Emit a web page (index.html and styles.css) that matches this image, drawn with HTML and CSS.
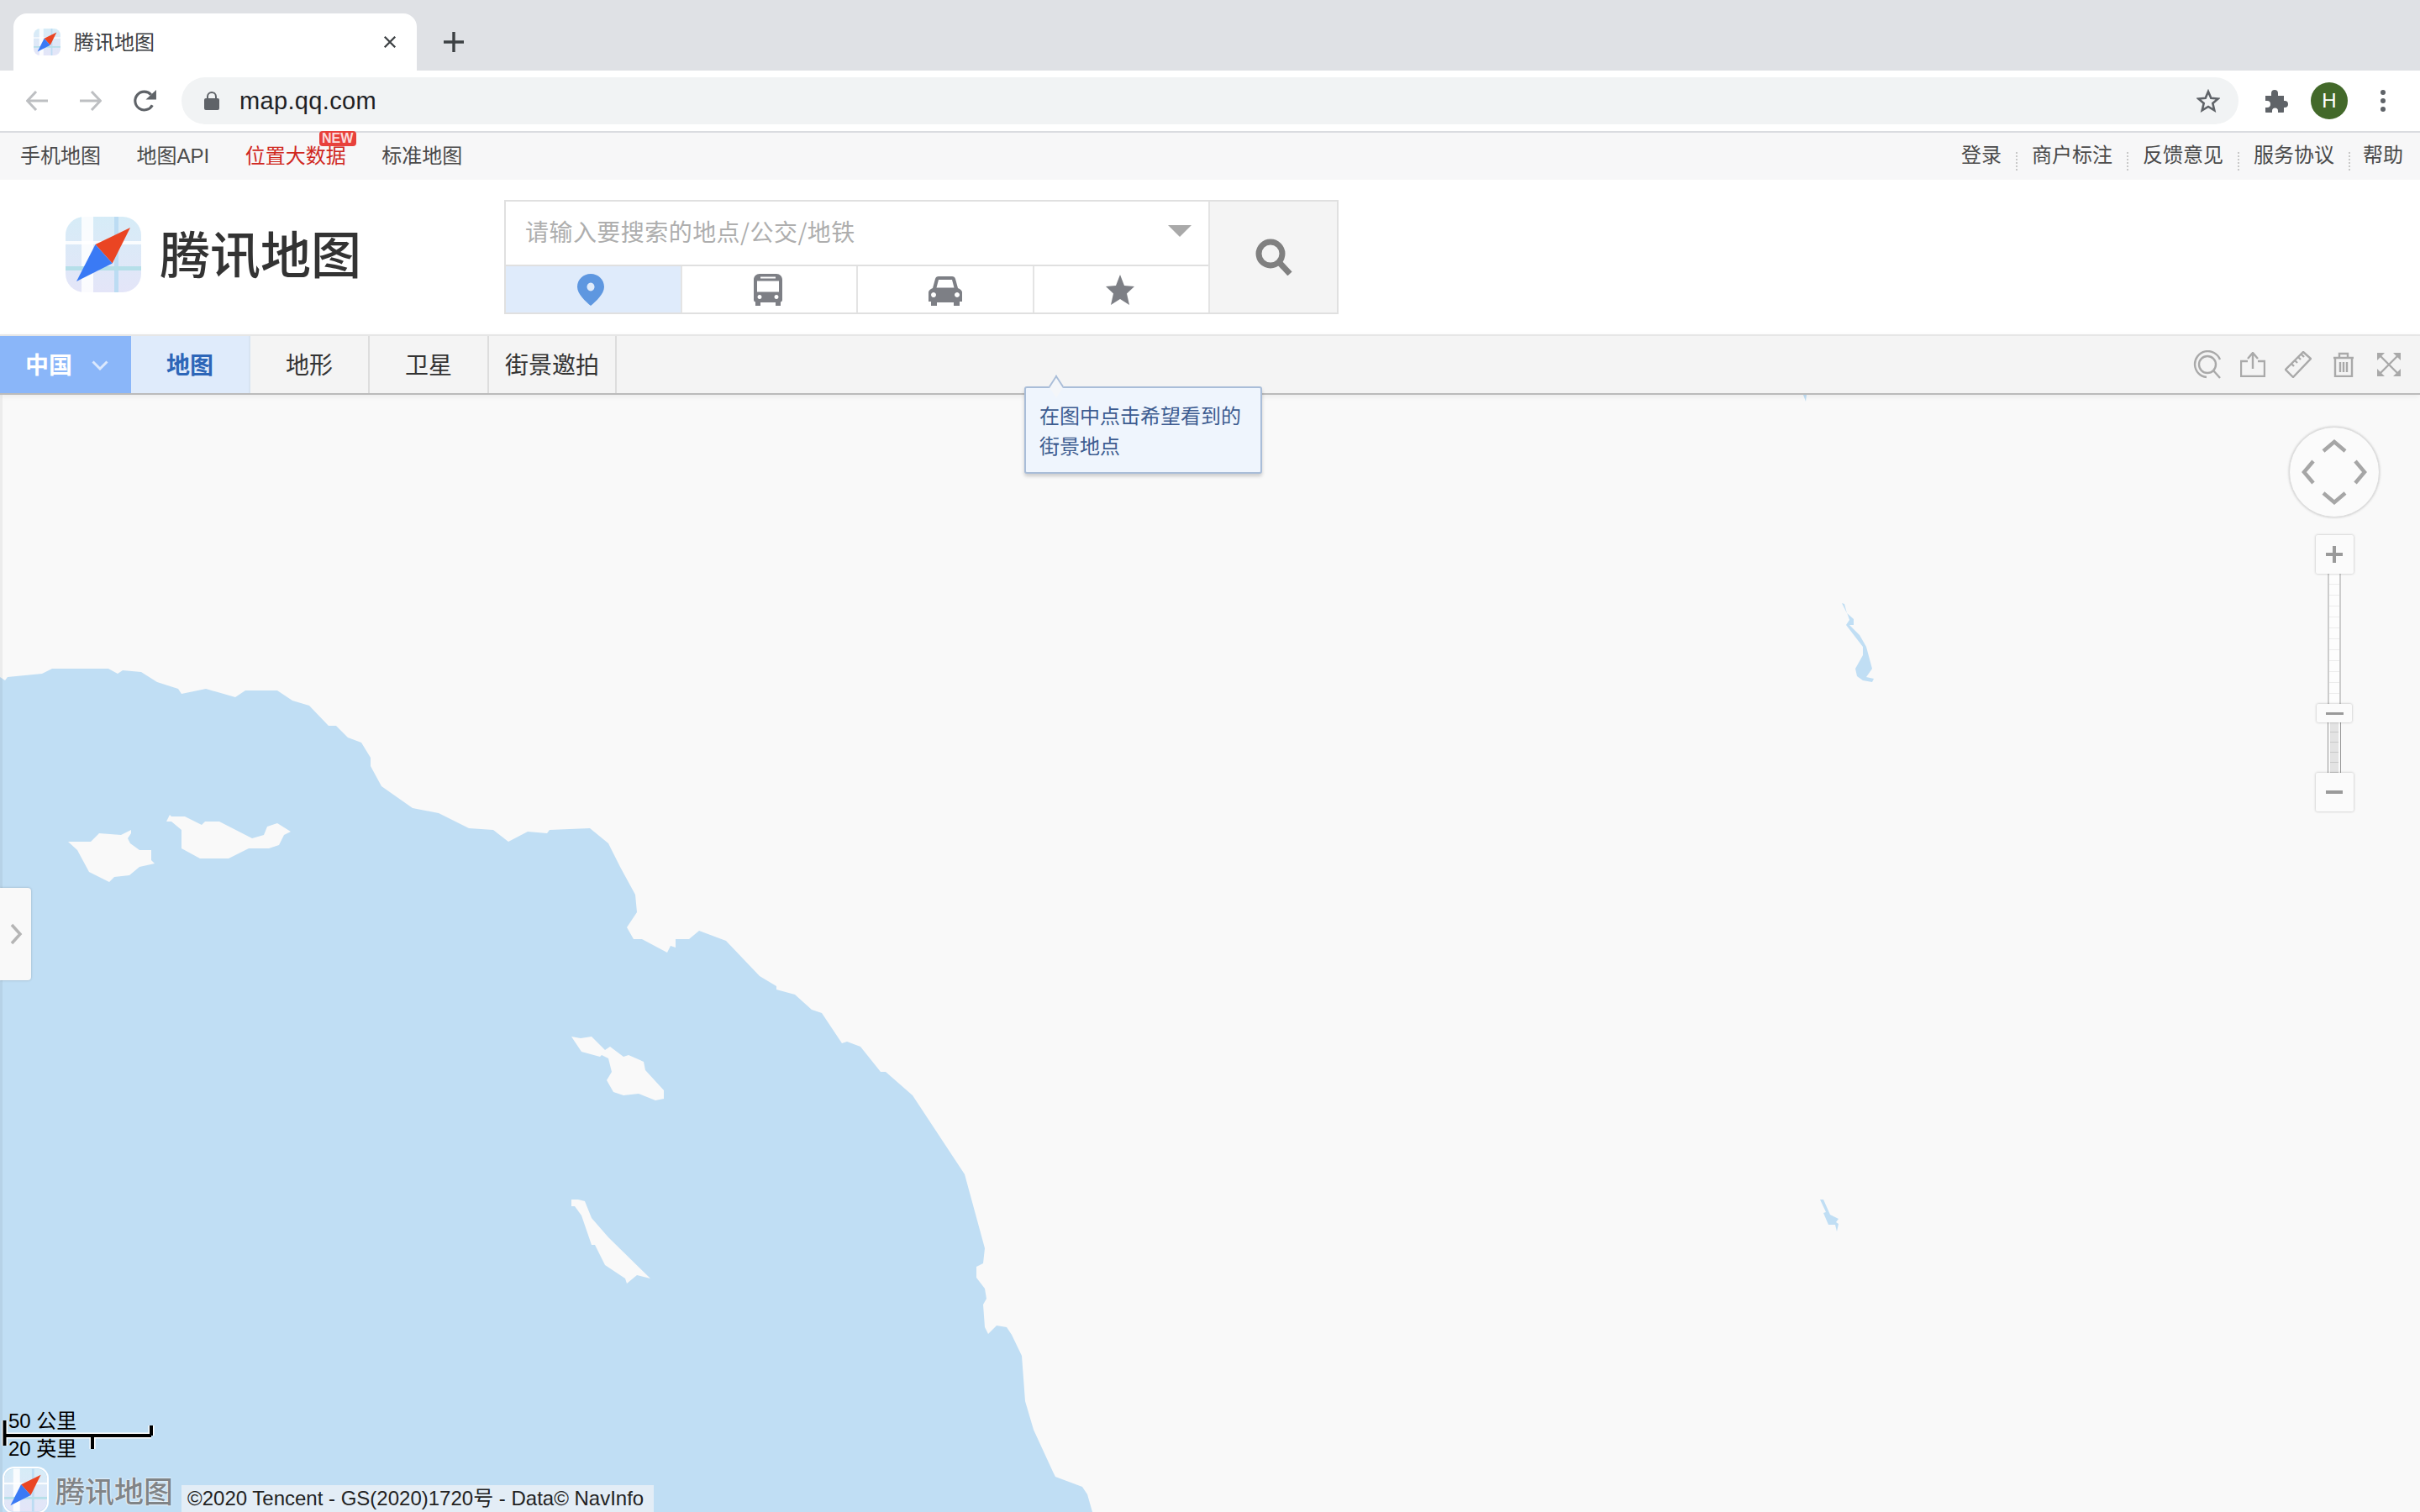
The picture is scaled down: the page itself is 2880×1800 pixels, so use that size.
FILE: index.html
```html
<!DOCTYPE html>
<html lang="zh-CN">
<head>
<meta charset="utf-8">
<title>腾讯地图</title>
<link rel="stylesheet" href="styles.css">
</head>
<body>
<svg class="defs" width="0" height="0" aria-hidden="true">
  <defs>
    <linearGradient id="tile" x1="0" y1="0" x2="0" y2="1">
      <stop offset="0" stop-color="#d6ecf7"/>
      <stop offset="1" stop-color="#e4e5f8"/>
    </linearGradient>
    <symbol id="compass" viewBox="0 0 90 90">
      <rect width="90" height="90" rx="22" fill="url(#tile)"/>
      <rect x="19" width="14" height="90" fill="#fff" opacity=".85"/>
      <rect y="29" width="90" height="4" fill="#fff" opacity=".85"/>
      <rect x="58" width="5" height="90" fill="#bcdcf3"/>
      <rect y="59" width="90" height="5" fill="#b6dfe9"/>
      <path d="M77 13 35.5 33 55.7 55.5Z" fill="#ea4523"/>
      <path d="M35.5 33 13 77 55.7 55.5Z" fill="#3a7af5"/>
    </symbol>
  </defs>
</svg>

<header class="tabstrip">
  <div class="tab">
    <svg class="favicon"><use href="#compass"/></svg>
    <span class="tab-title">腾讯地图</span>
    <svg class="tab-close" viewBox="0 0 18 18"><path d="M2 2 16 16M16 2 2 16"/></svg>
  </div>
  <svg class="tab-new" viewBox="0 0 24 24"><path d="M12 0V24M0 12H24"/></svg>
</header>

<nav class="toolbar">
  <div class="tool-btn"><svg class="nav-icon dim" viewBox="0 0 26 24"><path d="M26 12H2M12 1 1.500 12 12 23"/></svg></div>
  <div class="tool-btn"><svg class="nav-icon dim" viewBox="0 0 26 24"><path d="M0 12H24M14 1 24.500 12 14 23"/></svg></div>
  <div class="tool-btn"><svg class="nav-icon reload" viewBox="0 0 28 26"><path d="M22.500 17.500A10.500 10.500 0 1 1 21 5.500"/><path class="fill" d="M15 11H27V0Z"/></svg></div>
  <div class="omnibox">
    <svg class="lock" viewBox="0 0 18 22"><path d="M4 9V6a5 5 0 0 1 10 0v3" fill="none" stroke="#5f6368" stroke-width="2"/><rect y="8" width="18" height="14" rx="2" fill="#5f6368"/></svg>
    <span class="url">map.qq.com</span>
    <svg class="star-o" viewBox="0 0 28 28"><path d="M14 3 17.300 10.800 25.800 11.500 19.300 17 21.300 25.300 14 20.900 6.700 25.300 8.700 17 2.200 11.500 10.700 10.800Z"/></svg>
  </div>
  <div class="tool-right">
    <div class="tool-btn"><svg class="puzzle" viewBox="0 0 29 28"><path d="M2 8h7V5a4 4 0 0 1 8 0v3h7v6h1a4 4 0 0 1 0 8h-1v5c0 .6-.4 1-1 1h-6v-2a3.500 3.500 0 0 0-7 0v2H3c-.6 0-1-.4-1-1v-5h2a4 4 0 0 0 0-8H2Z"/></svg></div>
    <div class="tool-btn"><span class="avatar">H</span></div>
    <div class="tool-btn"><span class="kebab"><i></i><i></i><i></i></span></div>
  </div>
</nav>

<div class="topbar">
  <div class="top-left">
    <a>手机地图</a>
    <a>地图API</a>
    <a class="hot">位置大数据<b class="badge">NEW</b></a>
    <a>标准地图</a>
  </div>
  <div class="top-right">
    <a>登录</a><i class="sep"></i>
    <a>商户标注</a><i class="sep"></i>
    <a>反馈意见</a><i class="sep"></i>
    <a>服务协议</a><i class="sep"></i>
    <a class="last">帮助</a>
  </div>
</div>

<section class="masthead">
  <svg class="logo-mark"><use href="#compass"/></svg>
  <div class="logo-text">腾讯地图</div>
  <div class="searchbox">
    <div class="search-main">
      <div class="search-input">
        <span class="placeholder">请输入要搜索的地点/公交/地铁</span>
        <span class="caret"></span>
      </div>
      <div class="search-modes">
        <div class="mode active">
          <svg class="ic-pin" viewBox="0 0 32 38"><path fill-rule="evenodd" d="M16 0C24.800 0 32 6.500 32 15.500 32 24 22 33 16 38 10 33 0 24 0 15.500 0 6.500 7.200 0 16 0ZM16 10.500a4.500 5 0 1 0 .01 0Z"/></svg>
        </div>
        <div class="mode">
          <svg class="ic-bus" viewBox="0 0 34 38"><path fill-rule="evenodd" d="M7 0H27C31 0 34 3 34 7V31C34 32.500 33 33.500 32 33.500V38H26V34H8V38H2V33.500C1 33.500 0 32.500 0 31V7C0 3 3 0 7 0ZM8 3.500V5.500H26V3.500ZM4 8.500V21.500H30V8.500ZM7 25a2.500 2.500 0 1 0 .01 0ZM27 25a2.500 2.500 0 1 0 .01 0Z"/></svg>
        </div>
        <div class="mode">
          <svg class="ic-car" viewBox="0 0 40 35"><path fill-rule="evenodd" d="M12 0H28C30 0 31.500 1 32 3L35 14C38 15 40 17 40 19V30H37V35H30V31H10V35H3V30H0V19C0 17 2 15 5 14L8 3C8.500 1 10 0 12 0ZM12 4 9.500 13.500H30.500L28 4ZM6 19a3 3 0 1 0 .01 0ZM34 19a3 3 0 1 0 .01 0Z"/></svg>
        </div>
        <div class="mode">
          <svg class="ic-star" viewBox="0 0 34 36"><path d="M17 0 22 13 34 14 25 22.500 28 36 17 29 6 36 9 22.500 0 14 12 13Z"/></svg>
        </div>
      </div>
    </div>
    <div class="search-go">
      <svg class="ic-search" viewBox="0 0 44 44"><circle cx="18" cy="18" r="14"/><path d="M28 28 41 42"/></svg>
    </div>
  </div>
</section>

<div class="maptools">
  <div class="country">中国<svg class="country-arrow" viewBox="0 0 20 12"><path d="M1.500 1.500 10 10 18.500 1.500"/></svg></div>
  <div class="maptab active">地图</div>
  <div class="maptab">地形</div>
  <div class="maptab">卫星</div>
  <div class="maptab wide">街景邀拍</div>
  <div class="tool-icons">
    <div class="ti"><svg width="34" height="34" viewBox="0 0 34 34"><path d="M32 11A15.500 15.500 0 1 0 16 32"/><circle cx="17" cy="17" r="10"/><path d="M24 24 32 33"/></svg></div>
    <div class="ti"><svg width="30" height="30" viewBox="0 0 30 30"><path d="M9 11H1V29H29V11H21M15 20V2M9 8 15 1 21 8"/></svg></div>
    <div class="ti"><svg width="32" height="32" viewBox="0 0 32 32"><path d="M22 1 31 9 10 31 1 22ZM8 15 11 18M12 11 15 14M16 7 19 10M20 4 23 7"/></svg></div>
    <div class="ti"><svg width="26" height="30" viewBox="0 0 26 30"><path d="M1 7H25M8 7V2H18V7M3 7V29H23V7M9 12V24M13 12V24M17 12V24"/></svg></div>
    <div class="ti"><svg width="28" height="28" viewBox="0 0 28 28"><path d="M3 3 25 25M25 3 3 25"/><path class="fill" d="M0 0H9L0 9ZM28 0H19L28 9ZM0 28H9L0 19ZM28 28H19L28 19Z"/></svg></div>
  </div>
  <div class="tip">
    <span class="tip-arrow"></span>
    在图中点击希望看到的<br>街景地点
  </div>
</div>

<main class="map">
  <svg class="land" viewBox="0 470 2880 1330" preserveAspectRatio="none">
    <path class="water" fill-rule="evenodd" d="M0 806 6 810 9 806 50 802 62 796 129 796 140 802 146 798 168 800 187 812 212 820 216 826 245 820 280 830 292 822 330 822 348 834 368 840 391 864 400 864 414 878 430 884 441 902 441 912 454 936 491 962 522 968 558 986 587 988 605 1002 628 990 651 992 654 988 702 986 724 1004 738 1032 756 1065 758 1086 746 1104 754 1118 764 1118 794 1134 798 1126 804 1128 804 1118 820 1118 832 1108 864 1120 904 1162 924 1174 924 1178 946 1184 966 1202 978 1206 1002 1242 1008 1240 1024 1246 1048 1276 1054 1276 1086 1304 1148 1398 1172 1486 1170 1504 1162 1508 1162 1521 1172 1534 1174 1546 1170 1553 1172 1580 1176 1588 1186 1578 1198 1580 1204 1589 1216 1614 1220 1668 1230 1702 1253 1752 1256 1758 1288 1770 1294 1779 1300 1800 0 1800Z
    M81 1002 108 1002 118 992 144 994 156 988 156 992 152 998 155 1004 166 1012 180 1012 180 1024 184 1028 166 1032 154 1042 136 1044 130 1050 106 1038 92 1012Z
    M202 970 204 972 220 972 240 982 244 978 261 978 300 998 314 994 318 984 330 980 346 990 338 994 332 1006 320 1010 296 1010 272 1022 238 1022 216 1010 216 988 204 978 198 978Z
    M680 1234 691 1236 704 1234 720 1250 726 1246 742 1258 748 1256 766 1264 768 1274 790 1298 790 1308 780 1310 760 1302 742 1304 730 1300 722 1286 728 1276 724 1260 716 1256 714 1258 692 1252Z
    M680 1428 688 1428 696 1430 704 1450 724 1473 774 1522 758 1518 746 1528 744 1522 720 1506 708 1482 704 1482 692 1447 684 1436 680 1436Z"/>
    <path class="water" d="M2192 718 2195 719 2198 730 2206 737 2206 744 2201 744 2213 756 2221 770 2228 796 2221 806 2230 808 2228 812 2217 810 2210 805 2208 796 2217 780 2217 770 2197 744 2201 738 2199 732Z"/>
    <path class="water" d="M2166 1428 2170 1428 2178 1446 2188 1451 2185 1455 2188 1457 2186 1466 2184 1458 2176 1458 2170 1444 2173 1443Z"/>
    <path class="water" d="M2146 470H2150L2149 478Z"/>
  </svg>

  <div class="drawer"><svg class="drawer-arrow" viewBox="0 0 16 26"><path d="M3 2 13 13 3 24"/></svg></div>

  <div class="controls">
    <div class="pan">
      <svg width="108" height="108" viewBox="0 0 108 108"><path d="M41 29 54 18 67 29M29 41 18 54 29 67M79 41 90 54 79 67M41 79 54 90 67 79"/></svg>
    </div>
    <div class="zoom-btn"><svg width="22" height="22" viewBox="0 0 22 22"><path d="M11 1V21M1 11H21"/></svg></div>
    <div class="zoom-track">
      <div class="zoom-upper"></div>
      <div class="zoom-thumb"><i></i></div>
      <div class="zoom-lower"></div>
    </div>
    <div class="zoom-btn"><svg width="22" height="22" viewBox="0 0 22 22"><path d="M1 11H21"/></svg></div>
  </div>

  <div class="scale">
    <span class="scale-km">50 公里</span>
    <span class="scale-mi">20 英里</span>
    <svg class="scale-bar" width="190" height="40" viewBox="0 0 190 40">
      <path class="halo" d="M5.500 2V32M5.500 20H180M180 20V8M110 20V36"/>
      <path class="bar" d="M5.500 2V32M5.500 20H180M180 20V8M110 20V36"/>
    </svg>
  </div>

  <div class="brand">
    <svg class="brand-mark"><use href="#compass"/></svg>
    <span class="brand-text">腾讯地图</span>
  </div>
  <div class="copyright">©2020 Tencent - GS(2020)1720号 - Data© NavInfo</div>
</main>
</body>
</html>
```
FILE: styles.css
```css
* { box-sizing: border-box; }
html, body { margin: 0; padding: 0; }
body {
  width: 2880px;
  height: 1800px;
  overflow: hidden;
  display: flex;
  flex-direction: column;
  background: #fff;
  font-family: "Liberation Sans", "Noto Sans CJK SC", sans-serif;
  color: #333;
}
.defs { position: absolute; }
svg { display: block; flex: none; }

/* browser tabs */
.tabstrip {
  height: 84px;
  flex: none;
  background: #dfe1e5;
  display: flex;
  align-items: flex-end;
  padding-left: 16px;
}
.tab {
  width: 480px;
  height: 68px;
  background: #fff;
  border-radius: 16px 16px 0 0;
  display: flex;
  align-items: center;
  padding: 0 24px;
}
.favicon { width: 32px; height: 32px; margin-right: 16px; }
.tab-title { font: 24px/34px "Noto Sans CJK SC", sans-serif; color: #3c4043; flex: 1; padding-bottom: 3px; }
.tab-close { width: 16px; height: 16px; fill: none; stroke: #3c4043; stroke-width: 2.600; }
.tab-new {
  width: 24px;
  height: 24px;
  margin: 0 0 22px 32px;
  fill: none;
  stroke: #3c4043;
  stroke-width: 3.400;
}

/* browser toolbar */
.toolbar {
  height: 74px;
  flex: none;
  background: #fff;
  border-bottom: 2px solid #dadce0;
  display: flex;
  align-items: center;
  padding: 0 12px;
}
.tool-btn { width: 64px; height: 56px; display: flex; align-items: center; justify-content: center; }
.nav-icon { width: 26px; height: 24px; fill: none; stroke: #5f6368; stroke-width: 3; }
.nav-icon.reload { width: 29px; height: 27px; }
.nav-icon .fill { fill: #5f6368; stroke: none; }
.nav-icon.dim { stroke: #bdbfc2; }
.omnibox {
  flex: 1;
  height: 56px;
  margin: 0 12px;
  background: #f1f3f4;
  border-radius: 28px;
  display: flex;
  align-items: center;
  padding: 0 22px 0 27px;
}
.lock { width: 18px; height: 22px; margin-right: 24px; }
.url { flex: 1; font-size: 29px; letter-spacing: .35px; color: #202124; }
.star-o { width: 28px; height: 28px; fill: none; stroke: #5f6368; stroke-width: 2.600; }
.tool-right { display: flex; }
.puzzle { width: 29px; height: 28px; fill: #5f6368; }
.avatar {
  width: 44px;
  height: 44px;
  border-radius: 50%;
  background: #43692a;
  color: #fff;
  font-size: 24px;
  display: flex;
  align-items: center;
  justify-content: center;
}
.kebab { display: flex; flex-direction: column; gap: 3.500px; }
.kebab i { width: 6.500px; height: 6.500px; border-radius: 50%; background: #5f6368; }

/* site top links */
.topbar {
  height: 56px;
  flex: none;
  background: #f7f7f8;
  display: flex;
  justify-content: space-between;
  align-items: center;
  padding: 0 20px 1px 24px;
  font: 24px/34px "Liberation Sans", "Noto Sans CJK SC", sans-serif;
  color: #4a4a4a;
}
.top-left { display: flex; gap: 42.500px; }
.top-right { display: flex; gap: 17px; }
.top-right .last { margin-left: -2px; }
.hot { color: #d0281e; position: relative; }
.badge {
  position: absolute;
  left: 88px;
  top: -13px;
  width: 44px;
  height: 18px;
  border-radius: 4px;
  background: #e8413c;
  color: #fbdcdc;
  font: bold 16px/18px "Liberation Sans", sans-serif;
  text-align: center;
}
.sep { width: 2px; height: 22px; margin-top: 13px; border-left: 2px dotted #c8c8c8; }

/* masthead */
.masthead {
  height: 184px;
  flex: none;
  background: #fff;
  display: flex;
  padding: 24px 0 0 78px;
}
.logo-mark { width: 90px; height: 90px; margin: 20px 22px 0 0; }
.logo-text {
  width: 240px;
  margin: 18px 170px 0 0;
  font: 500 60px/88px "Noto Sans CJK SC", sans-serif;
  color: #333;
  white-space: nowrap;
}
.searchbox {
  width: 993px;
  height: 136px;
  border: 2px solid #e0e0e0;
  display: flex;
}
.search-main { flex: 1; display: flex; flex-direction: column; }
.search-input {
  height: 77px;
  border-bottom: 2px solid #e0e0e0;
  display: flex;
  align-items: center;
  justify-content: space-between;
  padding: 0 20px 6px 23px;
}
.placeholder { font: 28px "Noto Sans CJK SC", sans-serif; letter-spacing: .45px; color: #aeaeae; }
.caret {
  width: 0;
  height: 0;
  border: solid transparent;
  border-width: 14px 14px 0;
  border-top-color: #a9a9a9;
}
.search-modes { flex: 1; display: flex; }
.mode {
  flex: 1;
  border-right: 2px solid #e4e4e4;
  display: flex;
  align-items: center;
  justify-content: center;
  fill: #7d7f85;
}
.mode:last-child { border-right: 0; }
.mode.active { background: #dfebfb; border-right: 2px solid #e4e4e4; fill: #5e97e0; }
.ic-pin { width: 32px; height: 38px; margin-right: 5px; }
.ic-bus { width: 34px; height: 38px; margin-right: 3px; }
.ic-car { width: 40px; height: 35px; margin-top: 3px; }
.ic-star { width: 34px; height: 36px; margin-right: 3px; }
.search-go {
  width: 153px;
  background: #f4f4f4;
  border-left: 2px solid #e4e4e4;
  display: flex;
  align-items: center;
  justify-content: center;
}
.ic-search { width: 44px; height: 44px; fill: none; stroke: #808080; stroke-width: 7; }

/* map toolbar */
.maptools {
  height: 72px;
  flex: none;
  background: #f4f4f4;
  border-top: 2px solid #e6e6e6;
  border-bottom: 2px solid #bbb;
  box-shadow: 0 2px 6px rgba(0, 0, 0, .06);
  display: flex;
  position: relative;
  z-index: 2;
  font: 28px/40px "Noto Sans CJK SC", sans-serif;
  color: #333;
}
.country {
  width: 156px;
  background: #8ab6f9;
  color: #fff;
  font-weight: 700;
  display: flex;
  align-items: center;
  padding: 0 0 2px 30px;
}
.country-arrow {
  width: 20px;
  height: 12px;
  margin: 3px 0 0 23px;
  fill: none;
  stroke: #dbe8fd;
  stroke-width: 3;
}
.maptab {
  width: 142px;
  border-right: 2px solid #ddd;
  display: flex;
  align-items: center;
  justify-content: center;
  padding-bottom: 2px;
}
.maptab.wide { width: 152px; }
.maptab.active { background: #dfebfb; color: #2d66b8; font-weight: 700; border-right-color: #d8e4f2; }
.tool-icons { margin-left: auto; display: flex; padding-right: 10px; }
.ti {
  width: 54px;
  display: flex;
  align-items: center;
  justify-content: center;
  fill: none;
  stroke: #a9a9a9;
  stroke-width: 2.400;
}
.ti .fill { fill: #a9a9a9; stroke: none; }
.tip {
  position: absolute;
  left: 1219px;
  top: 60px;
  width: 283px;
  height: 104px;
  padding: 14px 16px;
  background: #eff5fd;
  border: 2px solid #a9bdd8;
  border-radius: 3px;
  box-shadow: 0 3px 4px rgba(0, 0, 0, .18);
  font: 24px/36px "Noto Sans CJK SC", sans-serif;
  color: #3d5c90;
  z-index: 3;
}
.tip-arrow {
  position: absolute;
  left: 28px;
  top: -10px;
  width: 16px;
  height: 16px;
  background: #f4f6f9;
  border: solid #a9bdd8;
  border-width: 2px 0 0 2px;
  transform: rotate(45deg) skew(12deg, 12deg);
}

/* map */
.map {
  flex: 1;
  position: relative;
  background: #f9f9f9;
  overflow: hidden;
}
.map::before {
  content: "";
  position: absolute;
  left: 0;
  top: 0;
  bottom: 0;
  width: 3px;
  background: rgba(0, 0, 0, .05);
  z-index: 1;
}
.land { position: absolute; inset: 0; width: 100%; height: 100%; }
.water { fill: #c0def4; }
.drawer {
  position: absolute;
  left: 0;
  top: 587px;
  width: 37px;
  height: 110px;
  background: #f9f9f9;
  border-radius: 0 4px 4px 0;
  box-shadow: 0 0 3px rgba(0, 0, 0, .22);
  display: flex;
  align-items: center;
  padding-left: 11px;
  z-index: 2;
}
.drawer-arrow { width: 16px; height: 26px; fill: none; stroke: #b5b5b5; stroke-width: 3.500; }
.controls {
  position: absolute;
  right: 48px;
  top: 38px;
  width: 108px;
  display: flex;
  flex-direction: column;
  align-items: center;
}
.pan {
  width: 108px;
  height: 108px;
  border-radius: 50%;
  background: #fbfbfb;
  border: 1px solid #ddd;
  box-shadow: 0 0 3px rgba(0, 0, 0, .22);
  margin-bottom: 21px;
  fill: none;
  stroke: #a6a6a6;
  stroke-width: 4.500;
  overflow: hidden;
}
.pan svg { margin: -1px; }
.zoom-btn {
  width: 45px;
  height: 46px;
  background: #fbfbfb;
  border-radius: 2px;
  box-shadow: 0 0 3px rgba(0, 0, 0, .28);
  display: flex;
  align-items: center;
  justify-content: center;
  fill: none;
  stroke: #9a9a9a;
  stroke-width: 4;
  position: relative;
  z-index: 1;
}
.zoom-track {
  width: 16px;
  height: 237px;
  display: flex;
  flex-direction: column;
}
.zoom-upper {
  height: 155px;
  border: solid #ccc;
  border-width: 0 2px;
  background: repeating-linear-gradient(#fdfdfd 0, #fdfdfd 12px, #ececec 12px, #ececec 13px);
}
.zoom-thumb {
  width: 42px;
  height: 22px;
  margin-left: -13px;
  flex: none;
  background: #fbfbfb;
  border-radius: 2px;
  box-shadow: 0 0 3px rgba(0, 0, 0, .28);
  display: flex;
  align-items: center;
  justify-content: center;
  position: relative;
}
.zoom-thumb i { width: 21px; height: 3px; background: #9a9a9a; }
.zoom-lower {
  flex: 1;
  border: solid #999;
  border-width: 0 1px;
  background: repeating-linear-gradient(#e3e3e3 0, #e3e3e3 11px, #c8c8c8 11px, #c8c8c8 12px);
  box-shadow: inset 2px 0 0 #fafafa, inset -2px 0 0 #fafafa;
}
.scale {
  position: absolute;
  left: 0;
  top: 1208px;
  width: 200px;
  height: 70px;
  font: 24px/28px "Liberation Sans", "Noto Sans CJK SC", sans-serif;
  color: #000;
}
.scale-km { position: absolute; left: 10px; top: 0; }
.scale-mi { position: absolute; left: 10px; top: 33px; }
.scale-bar { position: absolute; left: 0; top: 11px; fill: none; }
.scale-bar .halo { stroke: #fff; stroke-width: 7; }
.scale-bar .bar { stroke: #000; stroke-width: 4; }
.brand {
  position: absolute;
  left: 5px;
  bottom: 0;
  height: 52px;
  display: flex;
  align-items: center;
}
.brand-mark { width: 51px; height: 52px; border: 0; margin-right: 10px; border-radius: 12px; box-shadow: 0 0 0 2px #fff; }
.brand-text {
  font: 500 35px/52px "Noto Sans CJK SC", sans-serif;
  color: #808487;
  text-shadow: 0 0 2px #fff, 0 0 2px #fff;
}
.copyright {
  position: absolute;
  left: 216px;
  bottom: 0;
  width: 562px;
  height: 32px;
  background: #e3edf6;
  padding-left: 7px;
  font: 24px/32px "Liberation Sans", "Noto Sans CJK SC", sans-serif;
  color: #222;
  white-space: nowrap;
}
```
